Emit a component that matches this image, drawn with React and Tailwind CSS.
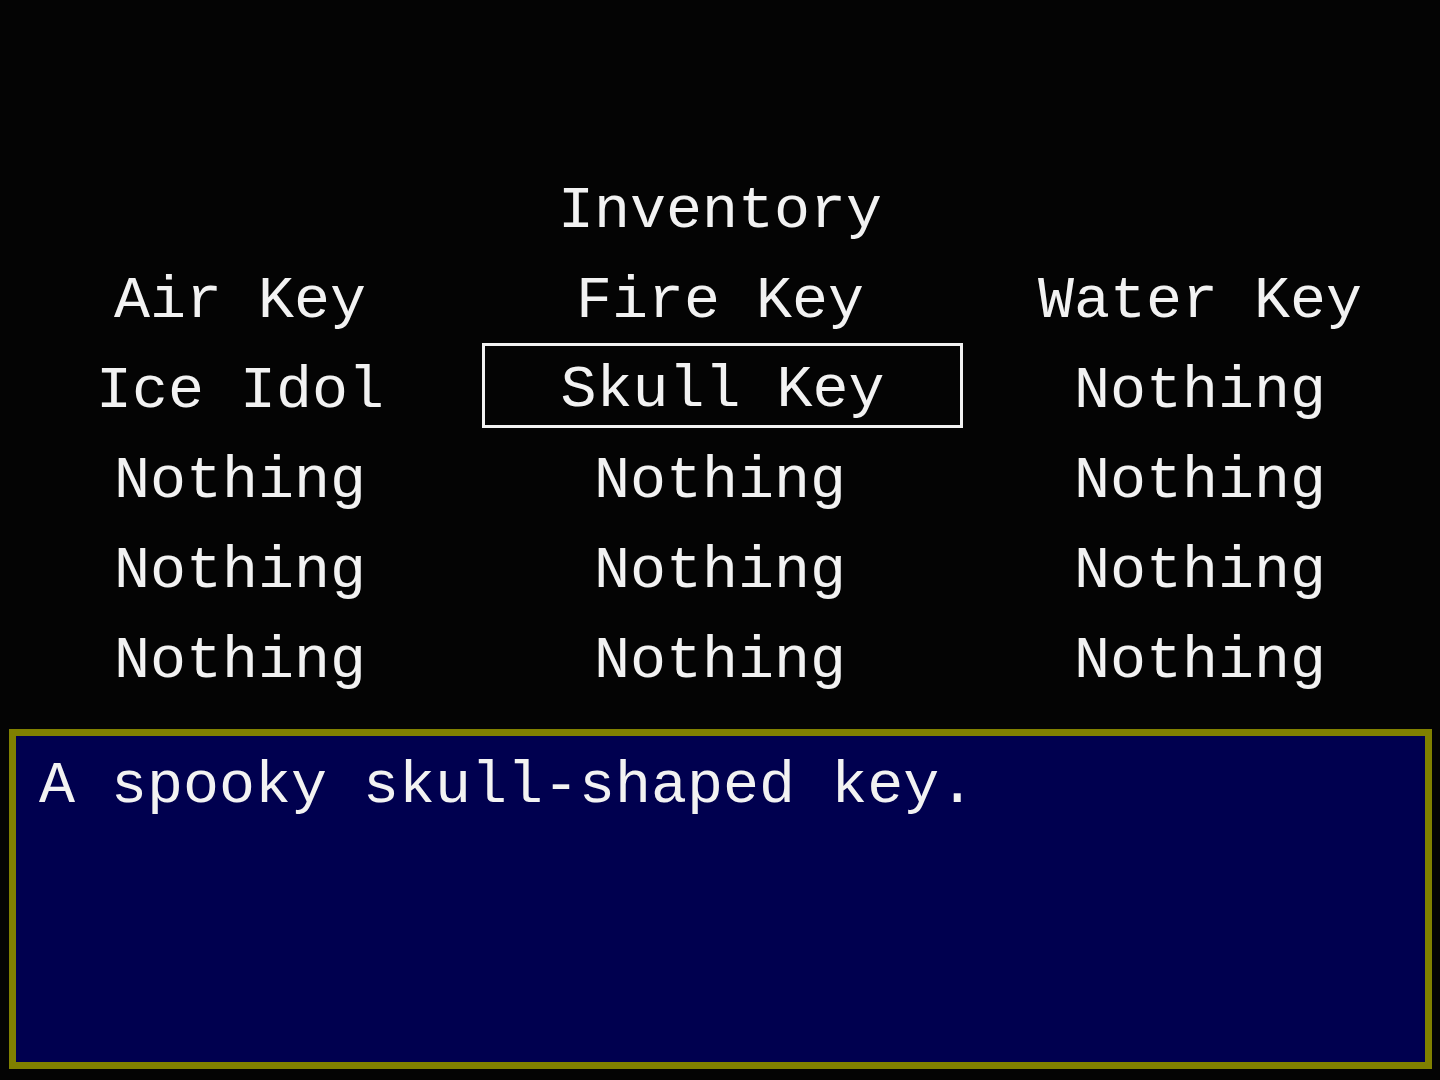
const grid = [
  ["Air Key", "Fire Key", "Water Key"],
  ["Ice Idol", "Skull Key", "Nothing"],
  ["Nothing", "Nothing", "Nothing"],
  ["Nothing", "Nothing", "Nothing"],
  ["Nothing", "Nothing", "Nothing"],
];

const selected = [1, 1];

export default function App() {
  return (
    <div className="w-[1440px] h-[1080px] bg-[#040404] text-[#f2f2f2] text-[60px] leading-[90px] font-['Liberation_Mono',monospace] flex flex-col overflow-hidden">
      {/* title */}
      <div className="mt-[166px] h-[90px] text-center">Inventory</div>

      {/* item grid */}
      <div className="grid grid-cols-3">
        {grid.map((row, r) =>
          row.map((item, c) => {
            const isSel = r === selected[0] && c === selected[1];
            return (
              <div key={`${r}-${c}`} className="h-[90px] flex justify-start items-start">
                {isSel ? (
                  <div className="shrink-0 mt-[-3px] ml-[2px] w-[481px] h-[85px] border-[3px] border-[#f2f2f2] flex justify-center items-center leading-[75px] pt-[10px]">
                    {item}
                  </div>
                ) : (
                  <span className="w-full text-center">{item}</span>
                )}
              </div>
            );
          })
        )}
      </div>

      {/* description box */}
      <div className="mt-[23px] ml-[9px] mr-[8px] h-[340px] border-[7px] border-[#808000] bg-[#00004f] px-[23px] pt-[5px] leading-[90px]">
        A spooky skull-shaped key.
      </div>
    </div>
  );
}
